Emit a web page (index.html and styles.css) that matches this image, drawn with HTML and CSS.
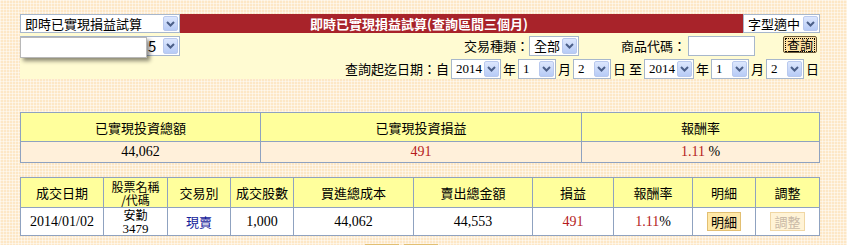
FILE: index.html
```html
<!DOCTYPE html>
<html lang="zh-Hant">
<head>
    <meta charset="UTF-8">
    <title>即時已實現損益試算</title>
    <link rel="stylesheet" href="styles.css">
</head>
<body>
    <div class="page">
        <div class="title-row">
            <span class="sel w160"><span class="sel-txt">即時已實現損益試算</span><span class="arr"><svg width="9" height="6" viewBox="0 0 9 6"><path d="M1 1 L4.5 4.5 L8 1" /></svg></span></span>
            <div class="title-bar">即時已實現損益試算(查詢區間三個月)</div>
            <span class="sel w76"><span class="sel-txt">字型適中</span><span class="arr"><svg width="9" height="6" viewBox="0 0 9 6"><path d="M1 1 L4.5 4.5 L8 1" /></svg></span></span>
        </div>

        <div class="query-panel">
            <div class="query-row">
                <span class="sel w160 account"><span class="sel-txt">5</span><span class="arr"><svg width="9" height="6" viewBox="0 0 9 6"><path d="M1 1 L4.5 4.5 L8 1" /></svg></span></span>
                <div class="popup"></div>
                <div class="query-right">
                    <span class="lbl">交易種類：</span>
                    <span class="sel w50"><span class="sel-txt">全部</span><span class="arr"><svg width="9" height="6" viewBox="0 0 9 6"><path d="M1 1 L4.5 4.5 L8 1" /></svg></span></span>
                    <span class="lbl code-lbl">商品代碼：</span>
                    <span class="txt-input"></span>
                    <span class="query-btn"><span class="focus">查詢</span></span>
                </div>
            </div>
            <div class="date-row">
                <span class="lbl">查詢起迄日期：自</span>
                <span class="sel w50"><span class="sel-txt num">2014</span><span class="arr"><svg width="9" height="6" viewBox="0 0 9 6"><path d="M1 1 L4.5 4.5 L8 1" /></svg></span></span>
                <span class="lbl">年</span>
                <span class="sel w38"><span class="sel-txt num">1</span><span class="arr"><svg width="9" height="6" viewBox="0 0 9 6"><path d="M1 1 L4.5 4.5 L8 1" /></svg></span></span>
                <span class="lbl">月</span>
                <span class="sel w38"><span class="sel-txt num">2</span><span class="arr"><svg width="9" height="6" viewBox="0 0 9 6"><path d="M1 1 L4.5 4.5 L8 1" /></svg></span></span>
                <span class="lbl">日 至</span>
                <span class="sel w50"><span class="sel-txt num">2014</span><span class="arr"><svg width="9" height="6" viewBox="0 0 9 6"><path d="M1 1 L4.5 4.5 L8 1" /></svg></span></span>
                <span class="lbl">年</span>
                <span class="sel w38"><span class="sel-txt num">1</span><span class="arr"><svg width="9" height="6" viewBox="0 0 9 6"><path d="M1 1 L4.5 4.5 L8 1" /></svg></span></span>
                <span class="lbl">月</span>
                <span class="sel w38"><span class="sel-txt num">2</span><span class="arr"><svg width="9" height="6" viewBox="0 0 9 6"><path d="M1 1 L4.5 4.5 L8 1" /></svg></span></span>
                <span class="lbl">日</span>
            </div>
        </div>

        <table class="grid summary">
            <colgroup><col style="width:240px"><col style="width:321px"><col style="width:238px"></colgroup>
            <tr class="head">
                <th>已實現投資總額</th>
                <th>已實現投資損益</th>
                <th>報酬率</th>
            </tr>
            <tr class="body-cream">
                <td class="num">44,062</td>
                <td class="num red">491</td>
                <td class="num"><span class="red">1.11</span> %</td>
            </tr>
        </table>

        <table class="grid detail">
            <colgroup>
                <col style="width:83px"><col style="width:64px"><col style="width:63px"><col style="width:63px"><col style="width:120px">
                <col style="width:119px"><col style="width:81px"><col style="width:79px"><col style="width:63px"><col style="width:64px">
            </colgroup>
            <tr class="head tall">
                <th>成交日期</th>
                <th class="two">股票名稱<br>/代碼</th>
                <th>交易別</th>
                <th>成交股數</th>
                <th>買進總成本</th>
                <th>賣出總金額</th>
                <th>損益</th>
                <th>報酬率</th>
                <th>明細</th>
                <th>調整</th>
            </tr>
            <tr class="body-white">
                <td class="num">2014/01/02</td>
                <td class="two">安勤<br><span class="num">3479</span></td>
                <td class="blue">現賣</td>
                <td class="num">1,000</td>
                <td class="num">44,062</td>
                <td class="num">44,553</td>
                <td class="num red">491</td>
                <td class="num"><span class="red">1.11</span>%</td>
                <td><span class="btn">明細</span></td>
                <td><span class="btn disabled">調整</span></td>
            </tr>
        </table>

        <div class="pager">
            <span class="btn page-btn">上頁</span>
            <span class="btn page-btn">下頁</span>
        </div>
    </div>
</body>
</html>
```

FILE: styles.css
```css
html, body {
    margin: 0;
    height: 245px;
    overflow: hidden;
}
body {
    font-family: "Noto Sans CJK TC", sans-serif;
    font-size: 13px;
    color: #000;
    background-color: #fde7c6;
    background-image:
        linear-gradient(90deg, rgba(255,255,255,0.45) 1px, transparent 1px),
        linear-gradient(rgba(255,255,255,0.45) 1px, transparent 1px);
    background-size: 3px 3px;
}
.page {
    width: 800px;
    margin-left: 20px;
    padding-top: 14px;
}
.num {
    font-family: "Liberation Serif", "Noto Sans CJK TC", serif;
    font-size: 14px;
}

/* select boxes */
.sel {
    display: inline-flex;
    align-items: center;
    box-sizing: border-box;
    height: 20px;
    background: #fff;
    border: 1px solid #a7b7cc;
    padding: 1px;
    vertical-align: middle;
}
.sel-txt {
    flex: 1;
    padding-left: 3px;
    font-size: 13px;
    line-height: 16px;
    white-space: nowrap;
}
.arr {
    display: flex;
    align-items: center;
    justify-content: center;
    flex: none;
    width: 15px;
    height: 16px;
    box-sizing: border-box;
    border: 1px solid #b9c9ee;
    border-radius: 2px;
    background: linear-gradient(#dde7fd, #b7cbf6);
}
.arr svg path {
    fill: none;
    stroke: #4b5f88;
    stroke-width: 2;
}
.w160 { width: 160px; }
.w76 { width: 77px; }
.w50 { width: 50px; }
.w38 { width: 38px; }

.title-row {
    display: flex;
    height: 19px;
}
.title-row .sel {
    height: 19px;
}
.title-row .arr {
    height: 15px;
}
.title-bar {
    flex: 1;
    background: #a8232a;
    color: #fff;
    font-weight: bold;
    text-align: center;
    line-height: 19px;
    padding-right: 85px;
}

/* query panel */
.query-panel {
    background: #fffbd2;
    height: 46px;
}
.query-row {
    position: relative;
    display: flex;
    align-items: flex-start;
    padding-top: 3px;
    height: 20px;
}
.account .sel-txt {
    padding-left: 126px;
    font-size: 15px;
}
.popup {
    position: absolute;
    left: 0;
    top: 4px;
    width: 125px;
    height: 19px;
    background: #fff;
    border: 1px solid #b8b8b8;
    box-shadow: 3px 3px 4px rgba(0,0,0,0.45);
}
.query-right {
    flex: 1;
    display: flex;
    align-items: center;
    justify-content: flex-end;
    height: 20px;
    padding-right: 3px;
}
.lbl {
    white-space: nowrap;
    line-height: 20px;
}
.code-lbl {
    margin-left: 42px;
    margin-right: 2px;
}
.txt-input {
    display: inline-block;
    box-sizing: border-box;
    width: 67px;
    height: 20px;
    background: #fff;
    border: 1px solid #a7b7cc;
    margin-right: 28px;
}
.query-btn {
    display: inline-flex;
    align-items: center;
    justify-content: center;
    box-sizing: border-box;
    width: 34px;
    height: 17px;
    margin-top: -3px;
    background: #ffe3a4;
    border: 1px solid #6b5a3a;
    border-radius: 2px;
}
.query-btn .focus {
    border: 1px dotted #000;
    line-height: 12px;
    padding: 0 1px;
}
.date-row {
    display: flex;
    justify-content: flex-end;
    align-items: center;
    gap: 2px;
    padding-top: 3px;
    padding-right: 1px;
}

/* tables */
.grid {
    width: 800px;
    border-collapse: collapse;
    table-layout: fixed;
    text-align: center;
}
.grid th, .grid td {
    border: 1px solid #8fa2c0;
    padding: 0;
    font-weight: normal;
}
.summary {
    margin-top: 33px;
}
.summary .head th {
    height: 28px;
}
.summary td {
    height: 20px;
}
.head {
    background: #ffff9c;
}
.body-cream {
    background: #fff0da;
}
.body-white {
    background: #fff;
}
.detail {
    margin-top: 14px;
}
.detail .head th {
    height: 29px;
}
.detail td {
    height: 25px;
}
.grid .two {
    font-size: 12px;
    line-height: 13px;
}
.two .num {
    font-size: 13px;
    line-height: 12px;
}
.red {
    color: #b51c1c;
}
.blue {
    color: #14219a;
}
.btn {
    display: inline-block;
    box-sizing: border-box;
    padding: 0 3px;
    height: 19px;
    line-height: 17px;
    background: #ffe8a8;
    border: 1px solid #e2bf72;
}
.btn.disabled {
    color: #c9b9a6;
    background: #fff3d6;
    border-color: #f0d7a4;
}
.pager {
    display: flex;
    gap: 5px;
    padding-left: 345px;
    padding-top: 8px;
}
.page-btn {
    width: 34px;
}
```
